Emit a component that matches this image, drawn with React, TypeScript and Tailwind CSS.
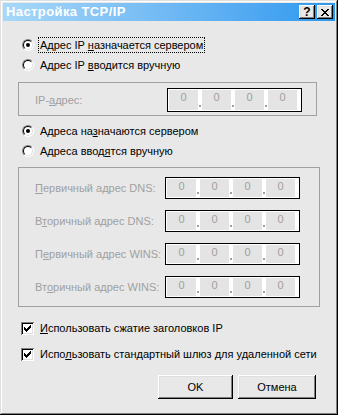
import React from 'react'

const raised =
    'shadow-[inset_-1px_-1px_0_#000,inset_1px_1px_0_#fff,inset_-2px_-2px_0_#808080,inset_2px_2px_0_#dfdfdf]'
const sunken =
    'shadow-[inset_1px_1px_0_#808080,inset_-1px_-1px_0_#fff,inset_2px_2px_0_#000,inset_-2px_-2px_0_#dfdfdf]'

function Radio({ checked }: { checked?: boolean }) {
    return (
        <span className="flex h-[12px] w-[12px] shrink-0 items-center justify-center rounded-full border border-b-white border-l-[#808080] border-r-white border-t-[#808080] bg-white">
            <span className="flex h-[10px] w-[10px] items-center justify-center rounded-full border border-b-[#dfdfdf] border-l-black border-r-[#dfdfdf] border-t-black">
                {checked && <span className="block h-[4px] w-[4px] rounded-full bg-black" />}
            </span>
        </span>
    )
}

function Check() {
    return (
        <span className={`relative flex h-[13px] w-[13px] shrink-0 items-center justify-center bg-white ${sunken}`}>
            <svg width="7" height="7" viewBox="0 0 7 7" shapeRendering="crispEdges">
                <path d="M6 0h1v3h-1v1h-1v1h-1v1h-1v1h-1v-1h-1v-1h-1v-3h1v1h1v1h1v-1h1v-1h1z" fill="#000" />
            </svg>
        </span>
    )
}

function IpBox({ tall }: { tall?: boolean }) {
    return (
        <div className={`flex w-[135px] shrink-0 border border-black bg-white p-px pr-[4px] ${tall ? 'h-[24px]' : 'h-[22px]'}`}>
            {[0, 1, 2, 3].map((i) => (
                <React.Fragment key={i}>
                    {i > 0 && (
                        <div className="flex w-[4px] items-end justify-center pb-[3px]">
                            <span className="block h-[2px] w-[2px] bg-[#a0a0a0]" />
                        </div>
                    )}
                    <div className="flex w-[29px] justify-center bg-[#e4e4e4] pt-px text-[11px] leading-[13px] text-[#a0a0a0]">0</div>
                </React.Fragment>
            ))}
        </div>
    )
}

function RadioRow({ checked, focus, children }: { checked?: boolean; focus?: boolean; children: React.ReactNode }) {
    return (
        <div className="ml-[19px] flex h-[16px] items-center">
            <Radio checked={checked} />
            <span
                className={`ml-[4px] whitespace-nowrap border px-px leading-[14px] ${focus ? 'border-dotted border-black' : 'border-transparent'}`}
            >
                {children}
            </span>
        </div>
    )
}

const dnsRows = [
    { before: '', key: 'П', after: 'ервичный адрес DNS:' },
    { before: 'В', key: 'т', after: 'оричный адрес DNS:' },
    { before: 'П', key: 'е', after: 'рвичный адрес WINS:' },
    { before: 'Вт', key: 'о', after: 'ричный адрес WINS:' },
]

export default function App() {
    return (
        <div
            className={`flex h-[415px] w-[338px] flex-col bg-[#e8e8e8] p-[3px] font-['Liberation_Sans',Arial,sans-serif] text-[11px] text-black shadow-[inset_-1px_-1px_0_#000,inset_1px_1px_0_#dfdfdf,inset_-2px_-2px_0_#808080,inset_2px_2px_0_#fff]`}
        >
            {/* Title bar */}
            <div className="flex h-[18px] items-center bg-gradient-to-r from-[#a8d8f8] to-[#2898ee] pl-[3px] pr-[2px]">
                <span className="whitespace-nowrap text-[13px] font-bold tracking-[0.4px] text-white">Настройка TCP/IP</span>
                <div className="ml-auto flex gap-[2px]">
                    <button className={`flex h-[14px] w-[16px] items-center justify-center bg-[#e8e8e8] text-[12px] font-bold leading-none ${raised}`}>
                        ?
                    </button>
                    <button className={`flex h-[14px] w-[16px] items-center justify-center bg-[#e8e8e8] ${raised}`}>
                        <svg width="8" height="7" viewBox="0 0 8 7" shapeRendering="crispEdges">
                            <path
                                d="M0 0h2v1h1v1h2v-1h1v-1h2v1h-1v1h-1v1h-1v1h1v1h1v1h1v1h-2v-1h-1v-1h-2v1h-1v1h-2v-1h1v-1h1v-1h1v-1h-1v-1h-1v-1h-1z"
                                fill="#000"
                            />
                        </svg>
                    </button>
                </div>
            </div>

            <div className="mt-[16px]">
                <RadioRow checked focus>
                    Адрес IP <u>н</u>азначается сервером
                </RadioRow>
            </div>
            <div className="mt-[4px]">
                <RadioRow>
                    Адрес IP <u>в</u>водится вручную
                </RadioRow>
            </div>

            {/* IP group */}
            <div className="ml-[15px] mt-[9px] flex h-[34px] w-[299px] items-start border border-[#a0a0a0] pt-[5px]">
                <span className="flex h-[24px] w-[148px] items-center whitespace-nowrap pl-[16px] text-[#a0a0a0]">
                    IP-<u>а</u>дрес:
                </span>
                <IpBox tall />
            </div>

            <div className="mt-[7px]">
                <RadioRow checked>
                    Адреса на<u>з</u>начаются сервером
                </RadioRow>
            </div>
            <div className="mt-[4px]">
                <RadioRow>
                    Адреса ввод<u>я</u>тся вручную
                </RadioRow>
            </div>

            {/* DNS / WINS group */}
            <div className="ml-[15px] mt-[8px] flex h-[140px] w-[302px] flex-col gap-[11px] border border-[#a0a0a0] pt-[9px]">
                {dnsRows.map((r, i) => (
                    <div key={i} className="flex h-[22px] items-center">
                        <span className="w-[146px] whitespace-nowrap pl-[16px] text-[#a0a0a0]">
                            {r.before}
                            <u>{r.key}</u>
                            {r.after}
                        </span>
                        <IpBox />
                    </div>
                ))}
            </div>

            <div className="ml-[18px] mt-[13px] flex h-[16px] items-center">
                <Check />
                <span className="ml-[6px] whitespace-nowrap">
                    <u>И</u>спользовать сжатие заголовков IP
                </span>
            </div>
            <div className="ml-[18px] mt-[10px] flex h-[16px] items-center">
                <Check />
                <span className="ml-[6px] whitespace-nowrap">
                    Испо<u>л</u>ьзовать стандартный шлюз для удаленной сети
                </span>
            </div>

            <div className="mr-[19px] mt-[13px] flex justify-end gap-[5px]">
                <button className={`h-[24px] w-[75px] bg-[#e8e8e8] ${raised}`}>OK</button>
                <button className={`h-[24px] w-[78px] bg-[#e8e8e8] ${raised}`}>Отмена</button>
            </div>
        </div>
    )
}
